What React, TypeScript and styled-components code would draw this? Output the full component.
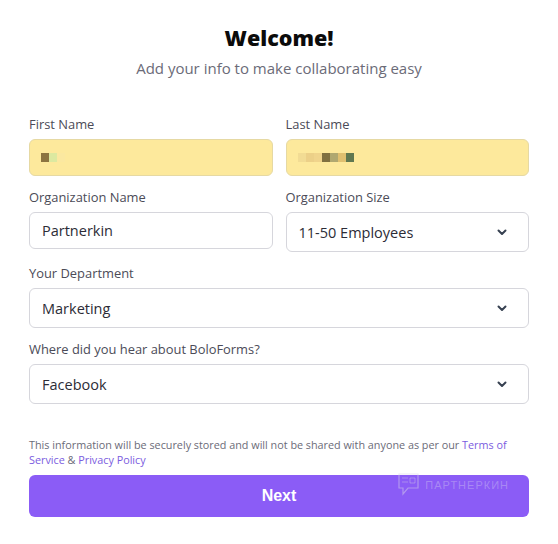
import React from "react";
import styled, { createGlobalStyle } from "styled-components";

const GlobalStyle = createGlobalStyle`
  * { box-sizing: border-box; }
  body {
    margin: 0;
    background: #ffffff;
    font-family: "Open Sans", "Noto Sans", sans-serif;
  }
`;

type Pixel = string;

const firstNameBlur: Pixel[] = ["#8c7440", "#dce9a0", "#fbe8a0"];
const lastNameBlur: Pixel[] = [
  "#f2dc94",
  "#ecd088",
  "#f0d48c",
  "#807040",
  "#b0a870",
  "#e0c070",
  "#607850",
];

const App: React.FC = () => {
  return (
    <>
      <GlobalStyle />
      <Page>
        <Title>Welcome!</Title>
        <Subtitle>Add your info to make collaborating easy</Subtitle>

        <Form>
          <Row>
            <Field>
              <Label>First Name</Label>
              <AutofillBox>
                <Blur>
                  {firstNameBlur.map((c, i) => (
                    <BlurCell key={i} $color={c} />
                  ))}
                </Blur>
              </AutofillBox>
            </Field>
            <Field>
              <Label>Last Name</Label>
              <AutofillBox>
                <Blur>
                  {lastNameBlur.map((c, i) => (
                    <BlurCell key={i} $color={c} />
                  ))}
                </Blur>
              </AutofillBox>
            </Field>
          </Row>

          <Row>
            <Field>
              <Label>Organization Name</Label>
              <InputBox>Partnerkin</InputBox>
            </Field>
            <Field>
              <Label>Organization Size</Label>
              <SelectBox>
                <span>11-50 Employees</span>
                <Chevron />
              </SelectBox>
            </Field>
          </Row>

          <Field>
            <Label>Your Department</Label>
            <SelectBox>
              <span>Marketing</span>
              <Chevron />
            </SelectBox>
          </Field>

          <Field>
            <Label>Where did you hear about BoloForms?</Label>
            <SelectBox>
              <span>Facebook</span>
              <Chevron />
            </SelectBox>
          </Field>
        </Form>

        <Note>
          This information will be securely stored and will not be shared with
          anyone as per our <Link>Terms of Service</Link> &amp;{" "}
          <Link>Privacy Policy</Link>
        </Note>

        <ButtonWrap>
          <NextButton>Next</NextButton>
          <Watermark>
            <WatermarkIcon />
            ПАРТНЕРКИН
          </Watermark>
        </ButtonWrap>
      </Page>
    </>
  );
};

export default App;

const Chevron: React.FC = () => (
  <ChevronSvg viewBox="0 0 10 7" width="10" height="7">
    <path
      d="M1.5 1.5l3.5 3.5 3.5-3.5"
      fill="none"
      stroke="#374151"
      strokeWidth="2"
      strokeLinecap="round"
      strokeLinejoin="round"
    />
  </ChevronSvg>
);

const WatermarkIcon: React.FC = () => (
  <svg width="21" height="24" viewBox="0 0 21 24">
    <path
      d="M1 1h19v14H10l-5 6v-6H1z"
      fill="none"
      stroke="rgba(215,210,232,0.5)"
      strokeWidth="1.2"
    />
    <path
      d="M4 5h6M4 9h6M12 5h5v5h-5z"
      fill="none"
      stroke="rgba(215,210,232,0.4)"
      strokeWidth="1"
    />
  </svg>
);

// Styled Components
const Page = styled.div`
  width: 558px;
  padding: 24px 29px 0 29px;
  display: flex;
  flex-direction: column;
`;

const Title = styled.h1`
  margin: 0;
  text-align: center;
  font-size: 21.5px;
  font-weight: 800;
  color: #0b0b0b;
  line-height: 28px;
`;

const Subtitle = styled.p`
  margin: 6px 0 0 0;
  text-align: center;
  font-size: 15px;
  color: #6b6b78;
  line-height: 20px;
`;

const Form = styled.div`
  margin-top: 38px;
  display: flex;
  flex-direction: column;
  gap: 13px;
`;

const Row = styled.div`
  display: grid;
  grid-template-columns: 1fr 1fr;
  column-gap: 13px;
`;

const Field = styled.div`
  display: flex;
  flex-direction: column;
`;

const Label = styled.label`
  font-size: 12.9px;
  color: #4b4b57;
  line-height: 16px;
  margin-bottom: 7px;
`;

const BaseBox = styled.div`
  height: 37px;
  border: 1px solid #d6d6dc;
  border-radius: 6px;
  padding: 0 12px;
  display: flex;
  align-items: center;
  font-size: 14.5px;
  color: #2c2c36;
`;

const AutofillBox = styled(BaseBox)`
  background: #fde99c;
  border-color: #e6d9a3;
  padding-left: 11px;
`;

const InputBox = styled(BaseBox)`
  background: #ffffff;
`;

const SelectBox = styled(BaseBox)`
  height: 40px;
  justify-content: space-between;
  padding-right: 21px;
`;

const ChevronSvg = styled.svg`
  display: block;
`;

const Blur = styled.div`
  display: flex;
  height: 9px;
`;

const BlurCell = styled.span<{ $color: string }>`
  width: 8px;
  height: 9px;
  background: ${(p) => p.$color};
`;

const Note = styled.p`
  margin: 33px 0 0 0;
  font-size: 10.8px;
  line-height: 15px;
  color: #6b6b78;
`;

const Link = styled.a`
  color: #7b5ce0;
  cursor: pointer;
`;

const ButtonWrap = styled.div`
  position: relative;
  margin-top: 8px;
`;

const NextButton = styled.button`
  width: 100%;
  height: 42px;
  border: none;
  border-radius: 6px;
  background: #8b5cf6;
  color: #ffffff;
  font-family: "Liberation Sans", Arial, sans-serif;
  font-size: 16px;
  font-weight: 700;
  cursor: pointer;
`;

const Watermark = styled.div`
  position: absolute;
  right: 20px;
  top: -2px;
  display: flex;
  align-items: center;
  gap: 6px;
  font-family: "Liberation Sans", Arial, sans-serif;
  font-size: 11px;
  letter-spacing: 1px;
  color: rgba(225, 220, 240, 0.35);
  pointer-events: none;
`;
